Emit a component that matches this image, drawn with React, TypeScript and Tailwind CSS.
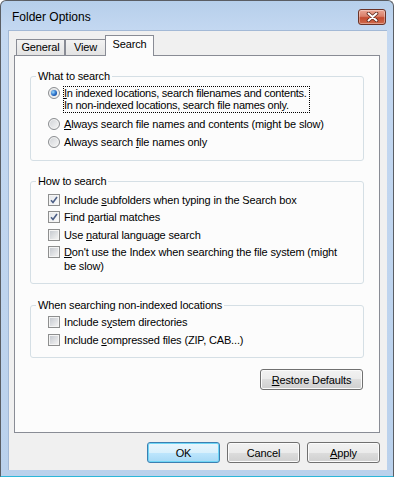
import type { ReactNode } from "react";

function CloseButton() {
  return (
    <div className="mt-[8px] flex h-[16px] w-[28px] items-center justify-center rounded-[3px] border border-[#6b3327] bg-[linear-gradient(#eba795,#d97f69_45%,#c34b30_55%,#cf6a4c)] shadow-[inset_0_0_0_1px_rgba(255,255,255,0.35)]">
      <svg width="13" height="10" viewBox="0 0 13 10">
        <path d="M2.5 1.5l8 7M10.5 1.5l-8 7" stroke="#5a2418" strokeWidth="3.6" strokeLinecap="round" />
        <path d="M2.5 1.5l8 7M10.5 1.5l-8 7" stroke="#ffffff" strokeWidth="2" strokeLinecap="round" />
      </svg>
    </div>
  );
}

function Radio({ checked }: { checked?: boolean }) {
  return (
    <span className="mt-px flex h-[12px] w-[12px] shrink-0 items-center justify-center rounded-full border border-[#8a8d90] bg-[linear-gradient(135deg,#cfd2d6,#f7f7f7)] shadow-[inset_0_0_0_1px_#f4f4f4]">
      {checked && (
        <span className="h-[6px] w-[6px] rounded-full bg-[radial-gradient(circle_at_35%_35%,#9ddcff,#2469c4_55%,#0f3d84)]" />
      )}
    </span>
  );
}

function Check({ checked }: { checked?: boolean }) {
  return (
    <span className="mt-px flex h-[12px] w-[12px] shrink-0 border border-[#8e8f8f] bg-[#f4f4f4] p-px">
      <span
        className={
          checked
            ? "flex h-full w-full items-center justify-center bg-[linear-gradient(135deg,#e6e8eb,#fafafa)]"
            : "flex h-full w-full items-center justify-center bg-[linear-gradient(135deg,#c6cad0,#f2f2f2)]"
        }
      >
        {checked && (
          <svg width="8" height="8" viewBox="0 0 8 8">
            <path d="M1 4.2l2 2.3L7 1" fill="none" stroke="#4c5f86" strokeWidth="1.6" />
          </svg>
        )}
      </span>
    </span>
  );
}

function Row({ control, children, className }: { control: ReactNode; children: ReactNode; className: string }) {
  return (
    <div className={"flex items-start gap-[4px] " + className}>
      {control}
      <div className="whitespace-nowrap leading-[14px]">{children}</div>
    </div>
  );
}

function Group({ title, className, children }: { title: string; className: string; children: ReactNode }) {
  return (
    <fieldset className={"w-[334px] rounded-[3px] border border-[#d5dfe5] " + className}>
      <legend className="ml-[5px] px-[2px] leading-[14px]">{title}</legend>
      {children}
    </fieldset>
  );
}

function Button({ children, primary, className = "" }: { children: ReactNode; primary?: boolean; className?: string }) {
  const look = primary
    ? "border-[#3c7fb1] bg-[linear-gradient(#eaf6fd,#d9f0fc_50%,#bee6fd_50%,#a7d9f5)] shadow-[inset_0_0_0_1px_#6fd6f6]"
    : "border-[#707070] bg-[linear-gradient(#f2f2f2,#ebebeb_50%,#dddddd_50%,#cfcfcf)] shadow-[inset_0_0_0_1px_#fbfbfb]";
  return (
    <div className={"flex h-[21px] items-center justify-center rounded-[3px] border leading-[14px] " + look + " " + className}>
      {children}
    </div>
  );
}

export default function App() {
  return (
    <div className="h-[478px] w-[395px] bg-white font-['Liberation_Sans',Arial,sans-serif] text-[11px] tracking-[-0.15px] text-black">
      <div className="flex h-[477px] w-[394px] flex-col rounded-t-[6px] border border-[#5a5e64] border-b-[#2db6d8] bg-[linear-gradient(#b6cfeb,#c4d8f1_30px,#bad1ec)]">
        <div className="flex h-[29px] shrink-0 items-start justify-between pl-[11px] pr-[7px]">
          <span className="mt-[8px] text-[12px] leading-[16px] tracking-normal">Folder Options</span>
          <CloseButton />
        </div>

        <div className="mb-[6px] ml-[7px] mr-[6px] flex flex-1 flex-col border-t border-l border-[#a3b9d6] bg-[#f0f0f0]">
          <div className="relative z-10 ml-[7px] mt-[4px] flex h-[21px] items-end">
            <div className="mb-px h-[16px] w-[49px] border border-b-0 border-[#898c95] bg-[linear-gradient(#f3f3f3,#e3e3e3)] text-center leading-[14px]">
              General
            </div>
            <div className="mb-px h-[16px] w-[41px] border border-b-0 border-[#898c95] bg-[linear-gradient(#f3f3f3,#e3e3e3)] text-center leading-[14px]">
              View
            </div>
            <div className="-ml-px h-[21px] w-[49px] border border-b-0 border-[#898c95] bg-[#fcfcfc] pt-px text-center leading-[14px]">
              Search
            </div>
          </div>

          <div className="-mt-px ml-[5px] flex h-[378px] w-[366px] flex-col border border-[#898c95] bg-[#fcfcfc] px-[15px]">
            <Group title="What to search" className="mt-[13px] pb-[11px]">
              <div className="pl-[17px]">
                <div className="mt-[3px] flex items-start gap-[3px]">
                  <Radio checked />
                  <div className="whitespace-nowrap border border-dotted border-black pb-px pr-[2px] leading-[12px] tracking-[-0.25px]">
                    <div>
                      <span className="underline underline-offset-1">I</span>n indexed locations, search filenames and contents.
                    </div>
                    <div>In non-indexed locations, search file names only.</div>
                  </div>
                </div>
                <Row control={<Radio />} className="mt-[4px]">
                  <span className="underline underline-offset-1">A</span>lways search file names and contents (might be slow)
                </Row>
                <Row control={<Radio />} className="mt-[4px]">
                  Always search <span className="underline underline-offset-1">f</span>ile names only
                </Row>
              </div>
            </Group>

            <Group title="How to search" className="mt-[13px] pb-[10px]">
              <div className="pl-[17px]">
                <Row control={<Check checked />} className="mt-[5px]">
                  Include <span className="underline underline-offset-1">s</span>ubfolders when typing in the Search box
                </Row>
                <Row control={<Check checked />} className="mt-[3px]">
                  Find <span className="underline underline-offset-1">p</span>artial matches
                </Row>
                <Row control={<Check />} className="mt-[4px]">
                  Use <span className="underline underline-offset-1">n</span>atural language search
                </Row>
                <Row control={<Check />} className="mt-[3px]">
                  <span className="underline underline-offset-1">D</span>on't use the Index when searching the file system (might
                  <br />
                  be slow)
                </Row>
              </div>
            </Group>

            <Group title="When searching non-indexed locations" className="mt-[14px] pb-[10px]">
              <div className="pl-[17px]">
                <Row control={<Check />} className="mt-[3px]">
                  Include s<span className="underline underline-offset-1">y</span>stem directories
                </Row>
                <Row control={<Check />} className="mt-[4px]">
                  Include <span className="underline underline-offset-1">c</span>ompressed files (ZIP, CAB...)
                </Row>
              </div>
            </Group>

            <div className="mt-[11px] flex w-[334px] justify-end">
              <Button className="mr-px w-[103px]">
                <span>
                  <span className="underline underline-offset-1">R</span>estore Defaults
                </span>
              </Button>
            </div>
          </div>

          <div className="mr-[7px] mt-[9px] flex justify-end gap-[7px]">
            <Button primary className="w-[73px]">
              OK
            </Button>
            <Button className="w-[73px]">Cancel</Button>
            <Button className="w-[73px]">
              <span>
                <span className="underline underline-offset-1">A</span>pply
              </span>
            </Button>
          </div>
        </div>
      </div>
    </div>
  );
}
